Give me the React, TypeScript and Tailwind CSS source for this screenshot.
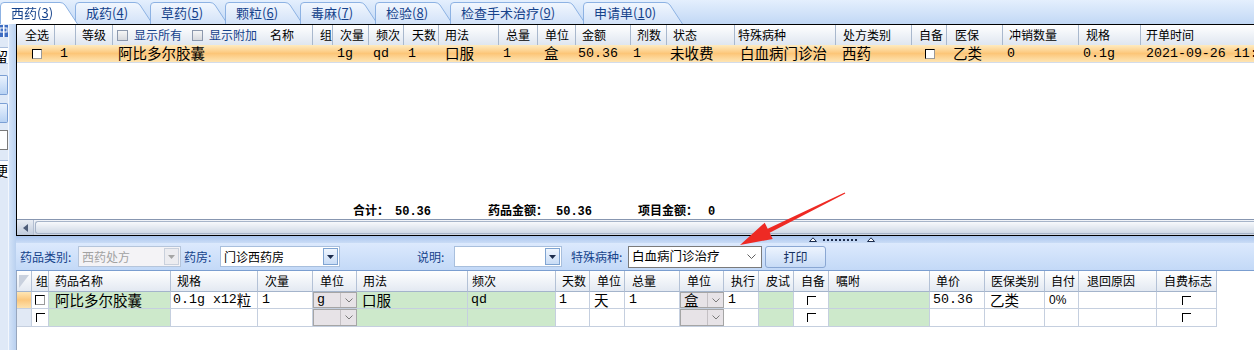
import React from "react";

const NUM = "font-['Liberation_Mono','Noto_Sans_CJK_SC',monospace] text-[13.3px]";
const DATA = "text-[14.5px]";

function Num({ children }: { children: React.ReactNode }) {
  return <span className={NUM}>{children}</span>;
}

function Box() {
  return <span className="block w-[10px] h-[10px] bg-white border-t border-l border-t-black border-l-black border-r border-b border-r-[#9a9a9a] border-b-[#9a9a9a]" />;
}

function Corner() {
  return <span className="block w-[9px] h-[9px] border-t border-l border-black" />;
}

function HeadCheck({ label }: { label: string }) {
  return (
    <span className="flex items-center">
      <span className="block w-[11px] h-[11px] border border-[#8d99ad] bg-linear-to-b from-[#f6f6f6] to-[#d6d9de]" />
      <span className="ml-[6px] text-[#15428b]">{label}</span>
    </span>
  );
}

function Tab({ label, n, active, w, cls }: { label: string; n: string; active?: boolean; w: number; cls: string }) {
  const id = `tabfill-${w}-${label.length}-${n}`;
  return (
    <div className={`relative h-[22px] shrink-0 ${cls} ${active ? "z-10" : ""}`}>
      <svg className="absolute inset-0" width={w} height={22}>
        <defs>
          <linearGradient id={id} x1="0" y1="0" x2="0" y2="1">
            <stop offset="0" stopColor={active ? "#ffffff" : "#f2f7fe"} />
            <stop offset="1" stopColor={active ? "#ffffff" : "#d2e2f8"} />
          </linearGradient>
        </defs>
        <path
          d={`M0.5 22 V4 Q0.5 0.5 4 0.5 H${w - 18} Q${w - 15} 0.5 ${w - 13} 3 L${w - 0.5} 22`}
          fill={`url(#${id})`}
          stroke="#8db2e3"
        />
      </svg>
      <span className="relative block pl-[11px] pt-[2px] text-[13px] leading-[17px] text-[#15428b] whitespace-nowrap">
        {label}(<span className="underline underline-offset-1">{n[0]}</span>
        {n.slice(1)})
      </span>
    </div>
  );
}

function TabStrip() {
  return (
    <div className="h-[24px] flex items-end bg-linear-to-b from-[#e4effd] to-[#c2d8f5]">
      <Tab label="西药" n="3" active w={78} cls="w-[78px]" />
      <Tab label="成药" n="4" w={78} cls="w-[78px] -ml-[3px]" />
      <Tab label="草药" n="5" w={78} cls="w-[78px] -ml-[3px]" />
      <Tab label="颗粒" n="6" w={78} cls="w-[78px] -ml-[3px]" />
      <Tab label="毒麻" n="7" w={78} cls="w-[78px] -ml-[3px]" />
      <Tab label="检验" n="8" w={78} cls="w-[78px] -ml-[3px]" />
      <Tab label="检查手术治疗" n="9" w={136} cls="w-[136px] -ml-[3px]" />
      <Tab label="申请单" n="10" w={100} cls="w-[100px] -ml-[3px]" />
    </div>
  );
}

function LeftStrip() {
  return (
    <div className="w-[16px] shrink-0 flex">
      <div className="w-[8px] flex flex-col bg-[#dfe9f7]">
        <div className="h-[12px] mt-[1px] bg-[#3d6cc2] flex items-center overflow-hidden">
          <svg width="8" height="12">
            <rect x="0" y="3" width="7" height="4" fill="none" stroke="#ffffff" />
            <rect x="3" y="0" width="1.5" height="12" fill="#ffffff" />
          </svg>
        </div>
        <div className="h-[17px] mt-[10px] bg-white border-y border-[#a9bedd] overflow-hidden flex items-center">
          <span className="text-[14px] leading-none -ml-[6px]">留</span>
        </div>
        <div className="h-[20px] mt-[11px] border border-l-0 border-[#7b9fd4] rounded-r-[2px] bg-linear-to-b from-[#eaf2fd] to-[#b8d2f3]" />
        <div className="h-[20px] mt-[8px] border border-l-0 border-[#7b9fd4] rounded-r-[2px] bg-linear-to-b from-[#eaf2fd] to-[#b8d2f3]" />
        <div className="h-[20px] mt-[7px] bg-white border border-l-0 border-[#7a7a7a]" />
        <div className="h-[18px] mt-[10px] bg-white overflow-hidden flex items-center border-t border-[#a9bedd]">
          <span className="text-[14px] leading-none -ml-[6px]">便</span>
        </div>
      </div>
      <div className="w-[8px] border-l border-[#f3f7fd] bg-linear-to-r from-[#d3e3f8] to-[#b9d0ef]" />
    </div>
  );
}

type TopCol = { w: string; head: React.ReactNode; hp: string; d?: React.ReactNode; dp: string };

const topCols: TopCol[] = [
  { w: "w-[38px]", head: "全选", hp: "pl-[8px]", d: <Box />, dp: "pl-[15px]" },
  { w: "w-[21px]", head: "", hp: "", d: <Num>1</Num>, dp: "pl-[5px]" },
  { w: "w-[37px]", head: "等级", hp: "pl-[6px]", dp: "" },
  {
    w: "w-[200px]",
    head: (
      <>
        <HeadCheck label="显示所有" />
        <span className="ml-[10px]">
          <HeadCheck label="显示附加" />
        </span>
        <span className="ml-[13px]">名称</span>
      </>
    ),
    hp: "pl-[4px]",
    d: <span className={DATA}>阿比多尔胶囊</span>,
    dp: "pl-[5px]",
  },
  { w: "w-[20px]", head: "组", hp: "pl-[7px]", dp: "" },
  { w: "w-[36px]", head: "次量", hp: "pl-[7px]", d: <Num>1g</Num>, dp: "pl-[4px]" },
  { w: "w-[35px]", head: "频次", hp: "pl-[7px]", d: <Num>qd</Num>, dp: "pl-[4px]" },
  { w: "w-[35px]", head: "天数", hp: "pl-[8px]", d: <Num>1</Num>, dp: "pl-[4px]" },
  { w: "w-[60px]", head: "用法", hp: "pl-[6px]", d: <span className={DATA}>口服</span>, dp: "pl-[6px]" },
  { w: "w-[39px]", head: "总量", hp: "pl-[7px]", d: <Num>1</Num>, dp: "pl-[4px]" },
  { w: "w-[38px]", head: "单位", hp: "pl-[7px]", d: <span className={DATA}>盒</span>, dp: "pl-[6px]" },
  { w: "w-[55px]", head: "金额", hp: "pl-[6px]", d: <Num>50.36</Num>, dp: "pl-[2px]" },
  { w: "w-[36px]", head: "剂数", hp: "pl-[6px]", d: <Num>1</Num>, dp: "pl-[2px]" },
  { w: "w-[68px]", head: "状态", hp: "pl-[6px]", d: <span className={DATA}>未收费</span>, dp: "pl-[3px]" },
  { w: "w-[101px]", head: "特殊病种", hp: "pl-[3px]", d: <span className={DATA}>白血病门诊治</span>, dp: "pl-[5px]" },
  { w: "w-[76px]", head: "处方类别", hp: "pl-[7px]", d: <span className={DATA}>西药</span>, dp: "pl-[6px]" },
  { w: "w-[35px]", head: "自备", hp: "pl-[7px]", d: <Box />, dp: "pl-[13px]" },
  { w: "w-[56px]", head: "医保", hp: "pl-[8px]", d: <span className={DATA}>乙类</span>, dp: "pl-[6px]" },
  { w: "w-[76px]", head: "冲销数量", hp: "pl-[6px]", d: <Num>0</Num>, dp: "pl-[4px]" },
  { w: "w-[62px]", head: "规格", hp: "pl-[7px]", d: <Num>0.1g</Num>, dp: "pl-[4px]" },
  { w: "w-[140px]", head: "开单时间", hp: "pl-[5px]", d: <Num>2021-09-26 11:05:32</Num>, dp: "pl-[5px]" },
];

function TopGrid() {
  return (
    <div className="h-[212px] shrink-0 flex flex-col border-t border-l border-b border-black bg-white">
      <div className="h-[20px] shrink-0 flex bg-linear-to-b from-white to-[#dfe6f0] text-[12px] leading-none">
        {topCols.map((c, i) => (
          <div key={i} className={`${c.w} shrink-0 h-full flex items-center border-r border-[#a9b8cd] whitespace-nowrap overflow-hidden ${c.hp}`}>
            {c.head}
          </div>
        ))}
      </div>
      <div className="h-[18px] shrink-0 flex border-b border-[#d3dcea] bg-linear-to-b from-[#feebc0] via-[#fcc678] to-[#fee5b3] leading-none">
        {topCols.map((c, i) => (
          <div key={i} className={`${c.w} shrink-0 h-full flex items-center whitespace-nowrap overflow-x-hidden ${c.dp}`}>
            {c.d}
          </div>
        ))}
      </div>
      <div className="flex-1" />
      <div className="h-[14px] shrink-0 flex items-end pb-[1px] text-[12px] font-bold leading-none whitespace-nowrap">
        <span className="ml-[336px] w-[135px] shrink-0">
          合计：<span className="ml-[6px] font-['Liberation_Mono',monospace]">50.36</span>
        </span>
        <span className="w-[150px] shrink-0">
          药品金额：<span className="ml-[8px] font-['Liberation_Mono',monospace]">50.36</span>
        </span>
        <span>
          项目金额：<span className="ml-[10px] font-['Liberation_Mono',monospace]">0</span>
        </span>
      </div>
      <div className="h-[16px] shrink-0 flex border-t border-[#8796b0] bg-linear-to-b from-[#f1f4f9] to-[#cbd4e2]">
        <div className="w-[17px] h-full flex items-center justify-center border-r border-[#b3bfd2] bg-linear-to-b from-[#e9edf4] to-[#bfcadb]">
          <svg width="5" height="8">
            <path d="M5 0 L0 4 L5 8Z" fill="#4e5d78" />
          </svg>
        </div>
        <div className="flex-1 ml-[1px] my-[1px] rounded-l-[3px] border border-r-0 border-[#a6b4c9] bg-linear-to-b from-[#f7f9fc] to-[#d0d9e6]" />
      </div>
    </div>
  );
}

function UpTri() {
  return (
    <svg width="8" height="5" className="shrink-0">
      <path d="M0.5 4.5 L4 0.8 L7.5 4.5Z" fill="#ffffff" stroke="#1c2c4c" />
    </svg>
  );
}

function Splitter() {
  return (
    <div className="h-[7px] shrink-0 flex items-center bg-linear-to-b from-[#a9c5ee] to-[#cadcf6]">
      <span className="ml-[793px]">
        <UpTri />
      </span>
      <span className="ml-[6px] flex gap-[2px]">
        {[0, 1, 2, 3, 4, 5, 6, 7, 8].map((i) => (
          <span key={i} className="block w-[2px] h-[2px] bg-[#1c2c4c]" />
        ))}
      </span>
      <span className="ml-[10px]">
        <UpTri />
      </span>
    </div>
  );
}

function DownTri({ color }: { color: string }) {
  return (
    <svg width="7" height="4">
      <path d="M0 0 H7 L3.5 4Z" fill={color} />
    </svg>
  );
}

function Toolbar() {
  return (
    <div className="h-[28px] shrink-0 flex items-center border-b border-[#7b9ed0] bg-linear-to-b from-[#dce9fd] to-[#c3d9f7] text-[12px] leading-none whitespace-nowrap">
      <span className="ml-[4px] w-[58px] shrink-0 text-[#15428b]">药品类别:</span>
      <div className="w-[103px] h-[21px] shrink-0 flex items-center border border-[#b5c5db] bg-[#f4f3f6]">
        <span className="flex-1 pl-[3px] text-[#a2a2a2]">西药处方</span>
        <span className="w-[15px] h-[17px] mr-[1px] flex items-center justify-center border border-[#c9d0dc] bg-[#ececf0]">
          <DownTri color="#a5a5a5" />
        </span>
      </div>
      <span className="ml-[3px] w-[36px] shrink-0 text-[#15428b]">药房:</span>
      <div className="w-[120px] h-[21px] shrink-0 flex items-center border border-[#a8bfdd] bg-white">
        <span className="flex-1 pl-[3px]">门诊西药房</span>
        <span className="w-[15px] h-[17px] mr-[1px] flex items-center justify-center border border-[#7fa4d2] bg-linear-to-b from-[#f0f6fe] to-[#c8dcf6]">
          <DownTri color="#1c2c4c" />
        </span>
      </div>
      <span className="ml-[77px] w-[37px] shrink-0 text-[#15428b]">说明:</span>
      <div className="w-[108px] h-[21px] shrink-0 flex items-center border border-[#a8bfdd] bg-white">
        <span className="flex-1" />
        <span className="w-[15px] h-[17px] mr-[1px] flex items-center justify-center border border-[#7fa4d2] bg-linear-to-b from-[#f0f6fe] to-[#c8dcf6]">
          <DownTri color="#1c2c4c" />
        </span>
      </div>
      <span className="ml-[9px] w-[57px] shrink-0 text-[#15428b]">特殊病种:</span>
      <div className="w-[134px] h-[22px] shrink-0 flex items-center border border-[#7a7a7a] bg-white">
        <span className="flex-1 pl-[3px] text-[12.5px]">白血病门诊治疗</span>
        <svg width="9" height="5" className="mr-[5px]">
          <polyline points="0.5,0.5 4.5,4.5 8.5,0.5" fill="none" stroke="#606060" />
        </svg>
      </div>
      <div className="ml-[3px] w-[61px] h-[22px] shrink-0 flex items-center justify-center rounded-[3px] border border-[#8aa7d3] bg-linear-to-b from-[#edf4fe] to-[#c7dbf6] text-[#15305e]">
        打印
      </div>
    </div>
  );
}

function Chevron() {
  return (
    <svg width="8" height="5">
      <polyline points="0.5,0.5 4,4 7.5,0.5" fill="none" stroke="#7a7a7a" />
    </svg>
  );
}

function Combo({ text }: { text?: React.ReactNode }) {
  return (
    <div className="w-full h-full flex border border-[#a5a5a5] bg-[#e7e3e7]">
      <span className="flex-1 pl-[3px] flex items-center">{text}</span>
      <span className="w-[16px] flex items-center justify-center border-l border-[#c4c0c4]">
        <Chevron />
      </span>
    </div>
  );
}

type BCol = { w: string; head: React.ReactNode; hp: string; r1?: React.ReactNode; r2?: React.ReactNode; p1?: string; kind?: "green" | "combo" | "center" | "ind" };

const bCols: BCol[] = [
  { w: "w-[15px]", head: "", hp: "", kind: "ind" },
  { w: "w-[17px]", head: "组", hp: "pl-[4px]", kind: "center", r1: <Box />, r2: <Corner /> },
  { w: "w-[122px]", head: "药品名称", hp: "pl-[6px]", kind: "green", r1: <span className={DATA}>阿比多尔胶囊</span>, p1: "pl-[6px]" },
  { w: "w-[87px]", head: "规格", hp: "pl-[6px]", r1: <><Num>0.1g x12</Num><span className={DATA}>粒</span></>, p1: "pl-[2px]" },
  { w: "w-[55px]", head: "次量", hp: "pl-[7px]", r1: <Num>1</Num>, p1: "pl-[4px]" },
  { w: "w-[44px]", head: "单位", hp: "pl-[7px]", kind: "combo", r1: <Num>g</Num> },
  { w: "w-[111px]", head: "用法", hp: "pl-[6px]", kind: "green", r1: <span className={DATA}>口服</span>, p1: "pl-[5px]" },
  { w: "w-[88px]", head: "频次", hp: "pl-[4px]", kind: "green", r1: <Num>qd</Num>, p1: "pl-[3px]" },
  { w: "w-[34px]", head: "天数", hp: "pl-[6px]", r1: <Num>1</Num>, p1: "pl-[3px]" },
  { w: "w-[35px]", head: "单位", hp: "pl-[7px]", r1: <span className={DATA}>天</span>, p1: "pl-[4px]" },
  { w: "w-[55px]", head: "总量", hp: "pl-[7px]", r1: <Num>1</Num>, p1: "pl-[4px]" },
  { w: "w-[44px]", head: "单位", hp: "pl-[7px]", kind: "combo", r1: <span className={DATA}>盒</span> },
  { w: "w-[35px]", head: "执行", hp: "pl-[7px]", r1: <Num>1</Num>, p1: "pl-[4px]" },
  { w: "w-[35px]", head: "皮试", hp: "pl-[7px]", kind: "green" },
  { w: "w-[35px]", head: "自备", hp: "pl-[7px]", kind: "center", r1: <Corner />, r2: <Corner /> },
  { w: "w-[101px]", head: "嘱咐", hp: "pl-[7px]", kind: "green" },
  { w: "w-[55px]", head: "单价", hp: "pl-[6px]", r1: <Num>50.36</Num>, p1: "pl-[3px]" },
  { w: "w-[60px]", head: "医保类别", hp: "pl-[6px]", r1: <span className={DATA}>乙类</span>, p1: "pl-[5px]" },
  { w: "w-[34px]", head: "自付", hp: "pl-[6px]", r1: <span className="font-['Liberation_Sans',sans-serif] text-[12px]">0%</span>, p1: "pl-[4px]" },
  { w: "w-[78px]", head: "退回原因", hp: "pl-[8px]" },
  { w: "w-[60px]", head: "自费标志", hp: "pl-[7px]", kind: "center", r1: <Corner />, r2: <Corner /> },
];

function BottomRow({ row, h }: { row: 1 | 2; h: string }) {
  return (
    <div className={`${h} flex w-fit leading-none`}>
      {bCols.map((c, i) => {
        const content = row === 1 ? c.r1 : c.r2;
        if (c.kind === "ind") {
          return (
            <div
              key={i}
              className={`${c.w} shrink-0 h-full border-r border-b border-[#c5cfdf] ${
                row === 1 ? "bg-linear-to-b from-[#fee6b4] via-[#fbc77c] to-[#fde2ae]" : "bg-[#e1e9f5]"
              }`}
            />
          );
        }
        if (c.kind === "combo") {
          return (
            <div key={i} className={`${c.w} shrink-0 h-full border-b border-[#c5cfdf]`}>
              <Combo text={row === 1 ? c.r1 : undefined} />
            </div>
          );
        }
        const bg = c.kind === "green" ? "bg-[#cde9cb]" : "bg-white";
        const align = c.kind === "center" ? "justify-center" : row === 1 ? c.p1 ?? "" : "";
        return (
          <div key={i} className={`${c.w} shrink-0 h-full flex items-center overflow-x-hidden whitespace-nowrap border-r border-b border-[#c5cfdf] ${bg} ${align}`}>
            {content}
          </div>
        );
      })}
    </div>
  );
}

function BottomGrid() {
  return (
    <div className="flex-1 border-l border-[#97a6bd] bg-white">
      <div className="h-[21px] flex w-fit text-[12px] leading-none">
        {bCols.map((c, i) => (
          <div
            key={i}
            className={`${c.w} shrink-0 h-full flex items-center border-r border-b border-r-[#b3c1d6] border-b-[#a4b4cb] bg-linear-to-b from-white to-[#e3e9f2] whitespace-nowrap overflow-hidden ${c.hp}`}
          >
            {c.kind === "ind" ? (
              <svg width="14" height="20">
                <path d="M2 4 L12 4 L2 17Z" fill="#c9d1de" />
              </svg>
            ) : (
              c.head
            )}
          </div>
        ))}
      </div>
      <BottomRow row={1} h="h-[17px]" />
      <BottomRow row={2} h="h-[18px]" />
    </div>
  );
}

function Arrow() {
  return (
    <svg className="absolute left-0 top-0 pointer-events-none" width="1254" height="350">
      <polygon
        points="740,245 772.7,238.9 769.7,232.8 845.3,193.6 844.7,192.4 767.7,228.8 764.7,222.7"
        fill="#ee2a24"
      />
    </svg>
  );
}

export default function App() {
  return (
    <div className="relative w-[1254px] h-[350px] overflow-hidden bg-white text-black font-['Noto_Sans_CJK_SC','Noto_Sans',sans-serif]">
      <TabStrip />
      <div className="flex h-[326px]">
        <LeftStrip />
        <div className="flex-1 min-w-0 flex flex-col">
          <TopGrid />
          <Splitter />
          <Toolbar />
          <BottomGrid />
        </div>
      </div>
      <Arrow />
    </div>
  );
}
